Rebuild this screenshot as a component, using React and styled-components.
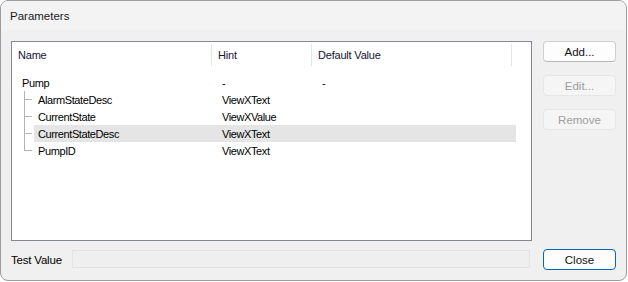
import React from 'react';
import styled, { createGlobalStyle } from 'styled-components';

const GlobalStyle = createGlobalStyle`
  html, body {
    margin: 0;
    padding: 0;
    background: #ffffff;
  }
  body {
    font-family: "Liberation Sans", Arial, sans-serif;
    font-size: 11px;
    color: #000;
  }
`;

const Window = styled.div`
  width: 627px;
  height: 281px;
  box-sizing: border-box;
  border: 1px solid #9c9c9c;
  border-radius: 8px;
  background: #f0f0f0;
  overflow: hidden;
  display: flex;
  flex-direction: column;
`;

const TitleBar = styled.div`
  height: 29px;
  flex: 0 0 29px;
  background: #f3f3f3;
  display: flex;
  align-items: center;
  padding-left: 9px;
  font-size: 11.5px;
  color: #1a1a1a;
`;

const Body = styled.div`
  display: grid;
  grid-template-columns: 521px 73px;
  grid-template-rows: 200px 21px;
  column-gap: 11px;
  row-gap: 8px;
  padding: 11px 0 0 10px;
`;

const ListView = styled.div`
  box-sizing: border-box;
  border: 1px solid #828790;
  background: #fff;
  display: flex;
  flex-direction: column;
`;

const Header = styled.div`
  display: flex;
  height: 25px;
`;

const HeaderCell = styled.div`
  width: ${p => p.$w}px;
  box-sizing: border-box;
  padding-left: 6px;
  display: flex;
  align-items: center;
  letter-spacing: -0.2px;
  color: #141432;
  position: relative;
  &::after {
    content: "";
    position: absolute;
    right: 0;
    top: 2px;
    bottom: 1px;
    width: 1px;
    background: #e5e5e5;
  }
`;

const Rows = styled.div`
  padding-top: 7px;
  width: 504px;
`;

const Row = styled.div`
  display: flex;
  height: 17px;
  padding-left: 6px;
`;

const Indent = styled.div`
  width: 16px;
  flex: 0 0 16px;
  position: relative;
  &::before {
    content: "";
    position: absolute;
    left: 6px;
    top: 0;
    height: ${p => (p.$last ? '9px' : '17px')};
    width: 1px;
    background: #b4b4b4;
  }
  &::after {
    content: "";
    position: absolute;
    left: 6px;
    top: 8px;
    width: 8px;
    height: 1px;
    background: #b4b4b4;
  }
`;

const RowBody = styled.div`
  flex: 1;
  display: flex;
  align-items: center;
  padding-left: 4px;
  background: ${p => (p.$selected ? '#e5e5e5' : 'transparent')};
  letter-spacing: -0.4px;
`;

const Cell = styled.div`
  width: ${p => p.$w}px;
  flex: 0 0 ${p => p.$w}px;
  white-space: nowrap;
`;

const Sidebar = styled.div`
  display: flex;
  flex-direction: column;
  gap: 13px;
`;

const Button = styled.button`
  width: 73px;
  height: 21px;
  box-sizing: border-box;
  font-family: "Liberation Sans", Arial, sans-serif;
  font-size: 11.5px;
  border-radius: 4px;
  padding: 0;
  border: 1px solid ${p => (p.$primary ? '#0067c0' : p.disabled ? '#e6e6e6' : '#d0d0d0')};
  border-bottom-color: ${p => (p.$primary ? '#0067c0' : p.disabled ? '#e6e6e6' : '#b8b8b8')};
  background: ${p => (p.disabled ? '#f5f5f5' : '#fdfdfd')};
  color: ${p => (p.disabled ? '#9d9d9d' : '#111')};
`;

const Footer = styled.div`
  display: flex;
  align-items: center;
  gap: 10px;
  padding-right: 2px;
`;

const Label = styled.span`
  font-size: 11.5px;
  letter-spacing: -0.2px;
`;

const TestInput = styled.div`
  flex: 1;
  height: 18px;
  box-sizing: border-box;
  border: 1px solid #e3e3e3;
  background: #efefef;
  margin-top: -1px;
`;

const params = [
  { name: 'AlarmStateDesc', hint: 'ViewXText' },
  { name: 'CurrentState', hint: 'ViewXValue' },
  { name: 'CurrentStateDesc', hint: 'ViewXText', selected: true },
  { name: 'PumpID', hint: 'ViewXText' },
];

const App = () => (
  <>
    <GlobalStyle />
    <Window>
      <TitleBar>Parameters</TitleBar>
      <Body>
        <ListView>
          <Header>
            <HeaderCell $w={200}>Name</HeaderCell>
            <HeaderCell $w={100}>Hint</HeaderCell>
            <HeaderCell $w={200}>Default Value</HeaderCell>
          </Header>
          <Rows>
            <Row>
              <RowBody>
                <Cell $w={200}>Pump</Cell>
                <Cell $w={100}>-</Cell>
                <Cell $w={100}>-</Cell>
              </RowBody>
            </Row>
            {params.map((p, i) => (
              <Row key={p.name}>
                <Indent $last={i === params.length - 1} />
                <RowBody $selected={p.selected}>
                  <Cell $w={184}>{p.name}</Cell>
                  <Cell $w={100}>{p.hint}</Cell>
                </RowBody>
              </Row>
            ))}
          </Rows>
        </ListView>
        <Sidebar>
          <Button>Add...</Button>
          <Button disabled>Edit...</Button>
          <Button disabled>Remove</Button>
        </Sidebar>
        <Footer>
          <Label>Test Value</Label>
          <TestInput />
        </Footer>
        <Button $primary>Close</Button>
      </Body>
    </Window>
  </>
);

export default App;
